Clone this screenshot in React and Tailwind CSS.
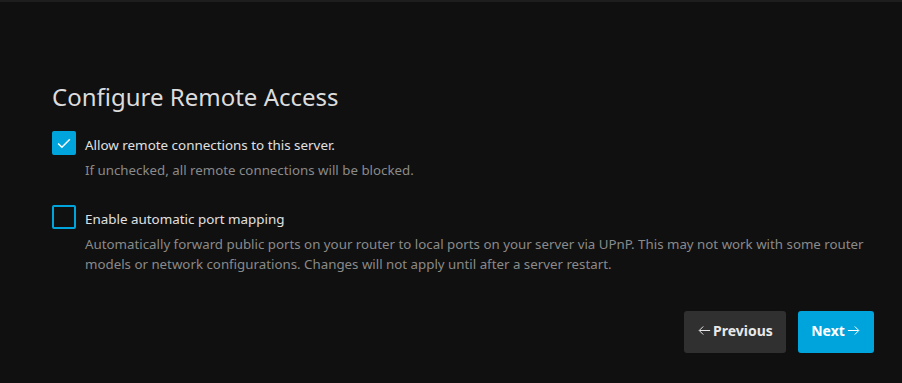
import React, { useState } from 'react';

const Check = ({ checked, onChange, label, hint }) => (
  <div className="flex gap-[9px]">
    <button
      type="button"
      onClick={onChange}
      className={`w-6 h-6 shrink-0 rounded-[2px] border-2 border-[#00a4dc] flex items-center justify-center ${checked ? 'bg-[#00a4dc]' : 'bg-transparent'}`}
    >
      {checked && (
        <svg viewBox="0 0 24 24" className="w-5 h-5" fill="none" stroke="white" strokeWidth="1.8">
          <path d="M5 12.5l4.5 4.5L19 7.5" />
        </svg>
      )}
    </button>
    <div className="pt-[5px]">
      <div className="text-[13.4px] leading-[18px] text-[#e0e0e0]">{label}</div>
      <div className="mt-[6px] text-[13.3px] leading-[20px] text-[#8a8a8a]">{hint}</div>
    </div>
  </div>
);

export default function App() {
  const [remote, setRemote] = useState(true);
  const [upnp, setUpnp] = useState(false);

  return (
    <div className="w-[902px] h-[383px] bg-[#101010] border-t-2 border-[#1e1e1e] font-['Noto_Sans',sans-serif] overflow-hidden">
      <div className="pl-[52px] pr-[28px] pt-[79px]">
        <h1 className="text-[24px] leading-[32px] text-[#dcdcdc] mb-[18px]">Configure Remote Access</h1>
        <Check
          checked={remote}
          onChange={() => setRemote(!remote)}
          label="Allow remote connections to this server."
          hint="If unchecked, all remote connections will be blocked."
        />
        <div className="h-[25px]" />
        <Check
          checked={upnp}
          onChange={() => setUpnp(!upnp)}
          label="Enable automatic port mapping"
          hint="Automatically forward public ports on your router to local ports on your server via UPnP. This may not work with some router models or network configurations. Changes will not apply until after a server restart."
        />
        <div className="flex justify-end gap-3 mt-[37px]">
          <button className="h-[42px] w-[102px] pb-[3px] rounded-[3px] bg-[#303030] text-[#e8e8e8] text-[14px] font-bold flex items-center justify-center gap-[1px]">
            <svg viewBox="0 0 24 24" className="w-[15px] h-[15px]" fill="none" stroke="currentColor" strokeWidth="1.6">
              <path d="M21 12H4M10 5.5L3.5 12l6.5 6.5" />
            </svg>
            Previous
          </button>
          <button className="h-[42px] w-[76px] pb-[3px] rounded-[3px] bg-[#00a4dc] text-white text-[14px] font-bold flex items-center justify-center gap-[1px]">
            Next
            <svg viewBox="0 0 24 24" className="w-[15px] h-[15px]" fill="none" stroke="currentColor" strokeWidth="1.6">
              <path d="M3 12h17M14 5.5l6.5 6.5-6.5 6.5" />
            </svg>
          </button>
        </div>
      </div>
    </div>
  );
}
